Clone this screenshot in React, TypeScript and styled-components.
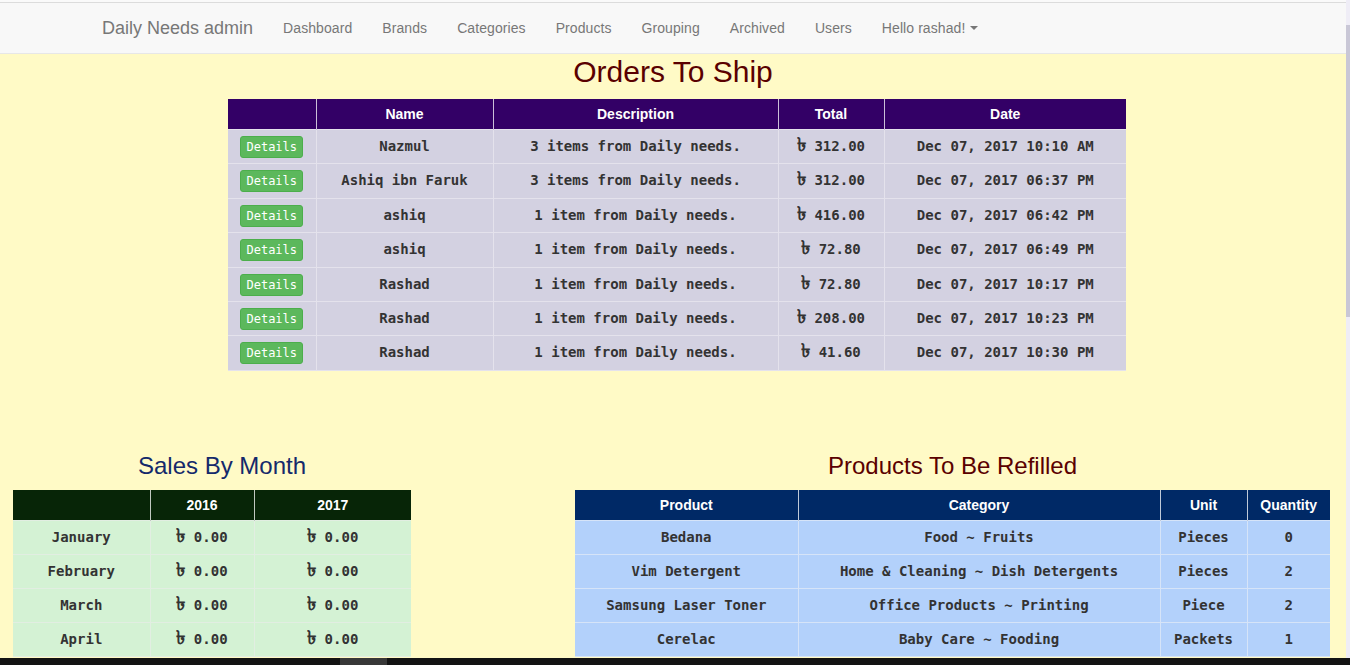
import styled, { createGlobalStyle } from 'styled-components';

const GlobalStyle = createGlobalStyle`
  * { box-sizing: border-box; }
  html, body { margin: 0; padding: 0; overflow: hidden; }
  body {
    font-family: "Liberation Sans", Arial, sans-serif;
    font-size: 14px;
    color: #333;
  }
`;

const navItems = ['Dashboard', 'Brands', 'Categories', 'Products', 'Grouping', 'Archived', 'Users'];

const orders = [
  { name: 'Nazmul', desc: '3 items from Daily needs.', total: '312.00', date: 'Dec 07, 2017 10:10 AM' },
  { name: 'Ashiq ibn Faruk', desc: '3 items from Daily needs.', total: '312.00', date: 'Dec 07, 2017 06:37 PM' },
  { name: 'ashiq', desc: '1 item from Daily needs.', total: '416.00', date: 'Dec 07, 2017 06:42 PM' },
  { name: 'ashiq', desc: '1 item from Daily needs.', total: '72.80', date: 'Dec 07, 2017 06:49 PM' },
  { name: 'Rashad', desc: '1 item from Daily needs.', total: '72.80', date: 'Dec 07, 2017 10:17 PM' },
  { name: 'Rashad', desc: '1 item from Daily needs.', total: '208.00', date: 'Dec 07, 2017 10:23 PM' },
  { name: 'Rashad', desc: '1 item from Daily needs.', total: '41.60', date: 'Dec 07, 2017 10:30 PM' },
];

const months = ['January', 'February', 'March', 'April'];

const refills = [
  { product: 'Bedana', category: 'Food ~ Fruits', unit: 'Pieces', qty: '0' },
  { product: 'Vim Detergent', category: 'Home & Cleaning ~ Dish Detergents', unit: 'Pieces', qty: '2' },
  { product: 'Samsung Laser Toner', category: 'Office Products ~ Printing', unit: 'Piece', qty: '2' },
  { product: 'Cerelac', category: 'Baby Care ~ Fooding', unit: 'Packets', qty: '1' },
];

// taka amount, sign a bit bigger like in the old page
const Money = ({ value }: { value: string }) => (
  <>
    <Taka>৳</Taka> {value}
  </>
);

export default function App() {
  return (
    <>
      <GlobalStyle />
      <Screen>
        <Viewport>
          <Page>
            <TopStrip />
            <Navbar>
              <NavContainer>
                <Brand>Daily Needs admin</Brand>
                {navItems.map((item) => (
                  <NavLink key={item}>{item}</NavLink>
                ))}
                <NavLink>
                  Hello rashad! <Caret />
                </NavLink>
              </NavContainer>
            </Navbar>

            <Title color="#5a0000" size={30}>Orders To Ship</Title>
            <OrdersWrap>
              <Table width={898} head="#330066" row="#d3d1e1" line="#e4e2ec" rowLine={21.4}>
                <colgroup>
                  <col style={{ width: 88 }} />
                  <col style={{ width: 177 }} />
                  <col style={{ width: 285 }} />
                  <col style={{ width: 106 }} />
                  <col style={{ width: 242 }} />
                </colgroup>
                <thead>
                  <tr>
                    <th></th>
                    <th>Name</th>
                    <th>Description</th>
                    <th>Total</th>
                    <th>Date</th>
                  </tr>
                </thead>
                <tbody>
                  {orders.map((o, i) => (
                    <tr key={i}>
                      <td><DetailsButton>Details</DetailsButton></td>
                      <td>{o.name}</td>
                      <td>{o.desc}</td>
                      <td><Money value={o.total} /></td>
                      <td>{o.date}</td>
                    </tr>
                  ))}
                </tbody>
              </Table>
            </OrdersWrap>

            <Bottom>
              <LeftCol>
                <Title color="#14296b" size={24}>Sales By Month</Title>
                <SalesWrap>
                  <Table width={398} head="#072507" row="#d4f2d4" line="#e2eee2" rowLine={21}>
                    <colgroup>
                      <col style={{ width: 137 }} />
                      <col style={{ width: 104 }} />
                      <col style={{ width: 157 }} />
                    </colgroup>
                    <thead>
                      <tr>
                        <th></th>
                        <th>2016</th>
                        <th>2017</th>
                      </tr>
                    </thead>
                    <tbody>
                      {months.map((m) => (
                        <tr key={m}>
                          <td>{m}</td>
                          <td><Money value="0.00" /></td>
                          <td><Money value="0.00" /></td>
                        </tr>
                      ))}
                    </tbody>
                  </Table>
                </SalesWrap>
              </LeftCol>
              <RightCol>
                <Title color="#5a0000" size={24}>Products To Be Refilled</Title>
                <Table width={755} head="#002966" row="#b3d1fb" line="#d6e4f8" rowLine={21}>
                  <colgroup>
                    <col style={{ width: 223 }} />
                    <col style={{ width: 362 }} />
                    <col style={{ width: 87 }} />
                    <col style={{ width: 83 }} />
                  </colgroup>
                  <thead>
                    <tr>
                      <th>Product</th>
                      <th>Category</th>
                      <th>Unit</th>
                      <th>Quantity</th>
                    </tr>
                  </thead>
                  <tbody>
                    {refills.map((r) => (
                      <tr key={r.product}>
                        <td>{r.product}</td>
                        <td>{r.category}</td>
                        <td>{r.unit}</td>
                        <td>{r.qty}</td>
                      </tr>
                    ))}
                  </tbody>
                </Table>
              </RightCol>
            </Bottom>
          </Page>
          <Scrollbar>
            <Thumb />
          </Scrollbar>
        </Viewport>
        <Taskbar>
          <TaskItem />
        </Taskbar>
      </Screen>
    </>
  );
}

const Screen = styled.div`
  width: 1350px;
  height: 665px;
  display: flex;
  flex-direction: column;
  overflow: hidden;
`;

const Viewport = styled.div`
  flex: 1;
  display: flex;
  min-height: 0;
  overflow: hidden;
`;

const Page = styled.div`
  flex: 1;
  background: #fffac6;
  overflow: hidden;
`;

const TopStrip = styled.div`
  height: 2px;
  background: #fafafa;
`;

const Navbar = styled.nav`
  background: #f8f8f8;
  border-top: 1px solid #dcdcdc;
  border-bottom: 1px solid #e7e7e7;
  height: 52px;
`;

const NavContainer = styled.div`
  width: 1170px;
  margin: 0 auto;
  padding: 0 15px 0 14px;
  display: flex;
  align-items: center;
  height: 50px;
`;

const Brand = styled.a`
  font-size: 18px;
  color: #777;
  padding: 15px 15px 15px 0;
  line-height: 20px;
`;

const NavLink = styled.a`
  font-size: 14px;
  letter-spacing: 0.08px;
  color: #777;
  padding: 15px;
  line-height: 20px;
  display: flex;
  align-items: center;
`;

const Caret = styled.span`
  display: inline-block;
  width: 0;
  height: 0;
  margin-left: 5px;
  border-top: 4px solid #777;
  border-left: 4px solid transparent;
  border-right: 4px solid transparent;
`;

const Title = styled.h2<{ color: string; size: number }>`
  margin: 1px 0 11px;
  text-align: center;
  font-weight: 400;
  font-size: ${(p) => p.size}px;
  line-height: 1.1;
  color: ${(p) => p.color};
`;

const OrdersWrap = styled.div`
  display: flex;
  justify-content: center;
  padding-left: 8px;
`;

const Table = styled.table<{ width: number; head: string; row: string; line: string; rowLine: number }>`
  width: ${(p) => p.width}px;
  table-layout: fixed;
  border-collapse: collapse;
  font-family: "DejaVu Sans Mono", "Liberation Mono", monospace;

  th {
    background: ${(p) => p.head};
    color: #fff;
    font-family: "Liberation Sans", Arial, sans-serif;
    font-weight: 700;
    font-size: 14px;
    line-height: 20px;
    padding: 5px 4px;
    text-align: center;
    border-left: 1px solid rgba(255, 255, 255, 0.75);
  }
  th:first-child { border-left: none; }

  td {
    background: ${(p) => p.row};
    color: #333;
    font-weight: 700;
    font-size: 14px;
    line-height: ${(p) => p.rowLine}px;
    padding: 6px 4px;
    text-align: center;
    white-space: nowrap;
    border: 1px solid ${(p) => p.line};
  }
  tr td:first-child { border-left: none; }
  tr td:last-child { border-right: none; }
`;

const Taka = styled.span`
  font-size: 19px;
  line-height: 0;
  font-weight: 700;
`;

const DetailsButton = styled.button`
  font-family: "DejaVu Sans Mono", "Liberation Mono", monospace;
  font-size: 12px;
  line-height: 18px;
  color: #fff;
  background: #5cb85c;
  border: 1px solid #4cae4c;
  border-radius: 3px;
  padding: 1px 5px;
  margin: -1px 0;
  vertical-align: middle;
  cursor: pointer;
`;

const Bottom = styled.div`
  display: flex;
  margin-top: 81px;
`;

const LeftCol = styled.div`
  width: 444px;
`;

const SalesWrap = styled.div`
  padding-left: 13px;
`;

const RightCol = styled.div`
  margin-left: 116px;
  width: 785px;
  padding: 0 15px;
  display: flex;
  flex-direction: column;
`;

const Scrollbar = styled.div`
  width: 4px;
  background: #efedf6;
  padding-top: 25px;
`;

const Thumb = styled.div`
  height: 292px;
  background: #c9c7d6;
`;

const Taskbar = styled.div`
  height: 7px;
  background: #131313;
  display: flex;
`;

const TaskItem = styled.div`
  margin-left: 340px;
  width: 47px;
  background: #383838;
`;
